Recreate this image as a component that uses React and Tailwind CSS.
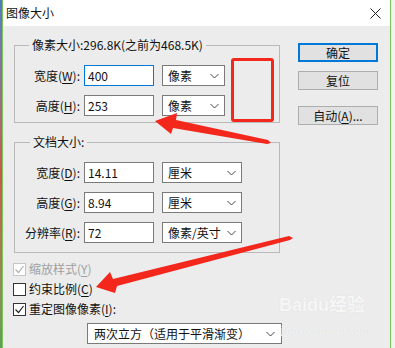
import React from "react";

function Chevron() {
  return (
    <svg width="9" height="6" viewBox="0 0 9 6" className="shrink-0">
      <path d="M0.5 1l4 4 4-4" fill="none" stroke="#444" strokeWidth="1" />
    </svg>
  );
}

function Select({ text, width }) {
  return (
    <div
      className={`ml-[8px] h-[21px] ${width} border border-[#7a7a7a] bg-white flex items-center justify-between pl-[5px] pr-[5px]`}
    >
      <span>{text}</span>
      <Chevron />
    </div>
  );
}

function Row({ label, hot, value, unit, selWidth, focus, first }) {
  return (
    <div className={`flex items-center ${first ? "" : "mt-[9px]"}`}>
      <div className="w-[65px] text-right whitespace-nowrap">
        {label}(<u className="underline-offset-2">{hot}</u>):
      </div>
      <div
        className={`ml-[4px] w-[70px] h-[21px] bg-white flex items-center pl-[3px] border ${
          focus ? "border-[#0078d7]" : "border-[#7a7a7a]"
        }`}
      >
        {value}
      </div>
      <Select text={unit} width={selWidth} />
    </div>
  );
}

function Check({ label, hot, checked, disabled, colon }) {
  return (
    <div className={`flex items-center h-[20px] ${disabled ? "text-[#a0a0a0]" : ""}`}>
      <div
        className={`w-[13px] h-[13px] border bg-white flex items-center justify-center ${
          disabled ? "border-[#c5c5c5]" : "border-[#333]"
        }`}
      >
        {checked && (
          <svg width="11" height="11" viewBox="0 0 11 11">
            <path
              d="M1.5 5.5l3 3 5-6.5"
              fill="none"
              stroke={disabled ? "#b0b0b0" : "#222"}
              strokeWidth="1.2"
            />
          </svg>
        )}
      </div>
      <span className="ml-[3px]">
        {label}(<u className="underline-offset-2">{hot}</u>){colon ? ":" : ""}
      </span>
    </div>
  );
}

function Button({ children, primary, className = "" }) {
  return (
    <div
      className={`w-[80px] h-[19px] bg-[#e1e1e1] flex items-center justify-center ${
        primary ? "border-2 border-[#0078d7]" : "border border-[#adadad]"
      } ${className}`}
    >
      {children}
    </div>
  );
}

export default function App() {
  return (
    <div className="w-[395px] h-[348px] flex overflow-hidden relative text-[12px] leading-[16px] text-[#111] font-['Noto_Sans_CJK_SC',sans-serif]">
      <div className="w-[2px] bg-gradient-to-b from-[#4d7cc4] via-[#c8584a] to-[#5aa05a]" />
      <div className="w-[389px] border-x border-[#7cc35b] bg-[#ececec] flex flex-col">
        <div className="h-[26px] bg-white flex items-center justify-between pl-[3px] pr-[9px] shrink-0">
          <span>图像大小</span>
          <svg width="11" height="11" viewBox="0 0 11 11">
            <path d="M0.5 0.5l10 10M10.5 0.5l-10 10" stroke="#222" strokeWidth="1" />
          </svg>
        </div>

        <div className="flex pl-[10px] pt-[10px]">
          <div className="w-[268px] flex flex-col">
            <fieldset className="ml-[1px] w-[266px] border border-[#b9b9b9] pb-[6px]">
              <legend className="ml-[14px] px-[3px] leading-[18px]">
                像素大小:296.8K(之前为468.5K)
              </legend>
              <div className="mt-[11px]">
                <Row first label="宽度" hot="W" value="400" unit="像素" selWidth="w-[63px]" focus />
                <Row label="高度" hot="H" value="253" unit="像素" selWidth="w-[63px]" />
              </div>
            </fieldset>

            <fieldset className="ml-[1px] mt-[10px] w-[266px] border border-[#b9b9b9] pb-[9px]">
              <legend className="ml-[15px] px-[3px] leading-[18px]">文档大小:</legend>
              <div className="mt-[11px]">
                <Row first label="宽度" hot="D" value="14.11" unit="厘米" selWidth="w-[80px]" />
                <Row label="高度" hot="G" value="8.94" unit="厘米" selWidth="w-[80px]" />
                <Row label="分辨率" hot="R" value="72" unit="像素/英寸" selWidth="w-[80px]" />
              </div>
            </fieldset>

            <div className="mt-[6px]">
              <Check label="缩放样式" hot="Y" checked disabled />
              <Check label="约束比例" hot="C" />
              <Check label="重定图像像素" hot="I" checked colon />
            </div>

            <div className="ml-[74px] mt-[4px] w-[195px] h-[21px] border border-[#7a7a7a] bg-white flex items-center justify-between pl-[6px] pr-[6px]">
              <span>两次立方（适用于平滑渐变）</span>
              <Chevron />
            </div>
          </div>

          <div className="ml-[17px] pt-[7px] flex flex-col">
            <Button primary>确定</Button>
            <Button className="mt-[9px]">复位</Button>
            <Button className="mt-[16px]">
              <span>
                自动(<u className="underline-offset-2">A</u>)...
              </span>
            </Button>
          </div>
        </div>
      </div>
      <div className="w-[4px] bg-[#f2f2f2]" />

      {/* annotation overlays */}
      <div className="absolute left-[231px] top-[58px] w-[43px] h-[64px] border-[3px] border-[#f3271c] rounded-[3px]" />
      <div className="absolute left-[279px] top-[294px] text-[#f6f6f6] font-bold text-[18px] leading-[22px] font-['Liberation_Sans','Noto_Sans_CJK_SC',sans-serif] [text-shadow:0_0_1px_#d8d8d8]">
        Baidu经验
      </div>
      <div className="absolute left-[281px] top-[323px] text-[#f4f4f4] text-[11px] leading-[14px] font-['Liberation_Sans',sans-serif] [text-shadow:0_0_1px_#d8d8d8]">
        jingyan.baidu.com
      </div>
      <svg className="absolute left-0 top-0 pointer-events-none" width="395" height="348">
        <polygon
          points="155,121 177,113 176,120 268,140 271,143 267,144 173,128 171,134"
          fill="#f3271c"
        />
        <polygon
          points="96,287 110,272 113,279 289,236 293,238 290,240 117,286 115,293"
          fill="#f3271c"
        />
      </svg>
    </div>
  );
}
